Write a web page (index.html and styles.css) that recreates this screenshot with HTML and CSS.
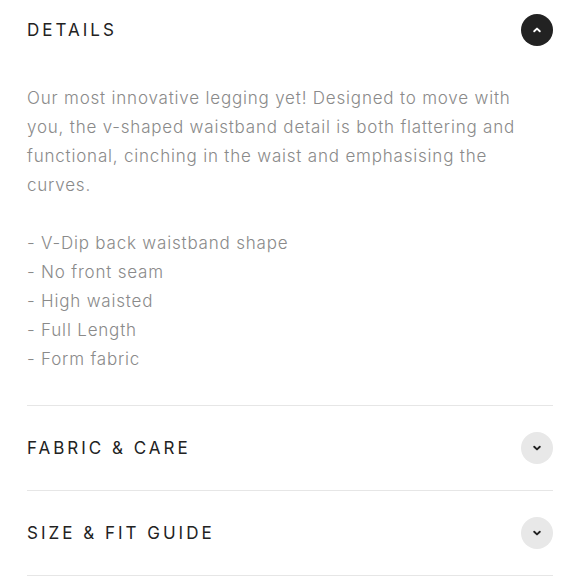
FILE: index.html
```html
<!DOCTYPE html>
<html lang="en">
<head>
<meta charset="utf-8">
<title>Details</title>
<link rel="stylesheet" href="styles.css">
</head>
<body>
<div class="accordion">
  <section class="item open">
    <div class="head">
      <h2 class="title">DETAILS</h2>
      <span class="toggle dark">
        <svg width="10" height="10" viewBox="0 0 10 10"><path d="M2.2 6.3 L5 3.6 L7.8 6.3" fill="none" stroke="#fff" stroke-width="1.9" stroke-linecap="round" stroke-linejoin="round"/></svg>
      </span>
    </div>
    <div class="content">
      <p>Our most innovative legging yet! Designed to move with you, the v-shaped waistband detail is both flattering and functional, cinching in the waist and emphasising the curves.</p>
      <p>- V-Dip back waistband shape<br>- No front seam<br>- High waisted<br>- Full Length<br>- Form fabric</p>
    </div>
  </section>
  <section class="item">
    <div class="head">
      <h2 class="title">FABRIC &amp; CARE</h2>
      <span class="toggle light">
        <svg width="10" height="10" viewBox="0 0 10 10"><path d="M2.2 3.7 L5 6.4 L7.8 3.7" fill="none" stroke="#222" stroke-width="1.9" stroke-linecap="round" stroke-linejoin="round"/></svg>
      </span>
    </div>
  </section>
  <section class="item">
    <div class="head">
      <h2 class="title">SIZE &amp; FIT GUIDE</h2>
      <span class="toggle light">
        <svg width="10" height="10" viewBox="0 0 10 10"><path d="M2.2 3.7 L5 6.4 L7.8 3.7" fill="none" stroke="#222" stroke-width="1.9" stroke-linecap="round" stroke-linejoin="round"/></svg>
      </span>
    </div>
  </section>
</div>
</body>
</html>
```
FILE: styles.css
```css
html, body {
  margin: 0;
  padding: 0;
  background: #fff;
}
body {
  font-family: Inter, "Noto Sans", sans-serif;
}
.accordion {
  padding: 0 27px;
}
.item {
  border-bottom: 1px solid #e6e6e6;
}
.head {
  display: flex;
  align-items: center;
  justify-content: space-between;
  height: 84px;
}
.item.open .head {
  height: 60px;
}
.title {
  margin: 0;
  font-size: 17px;
  font-weight: 400;
  letter-spacing: 3px;
  color: #222;
}
.toggle {
  width: 32px;
  height: 32px;
  border-radius: 50%;
  display: flex;
  align-items: center;
  justify-content: center;
}
.toggle.dark {
  background: #222;
}
.toggle.light {
  background: #e8e8e8;
}
.content {
  padding: 24px 0 31px;
  max-width: 522px;
}
.content p {
  margin: 0;
  font-size: 17px;
  font-weight: 300;
  letter-spacing: 0.8px;
  line-height: 29px;
  color: #8a8a8a;
}
.content p + p {
  margin-top: 29px;
}
```
